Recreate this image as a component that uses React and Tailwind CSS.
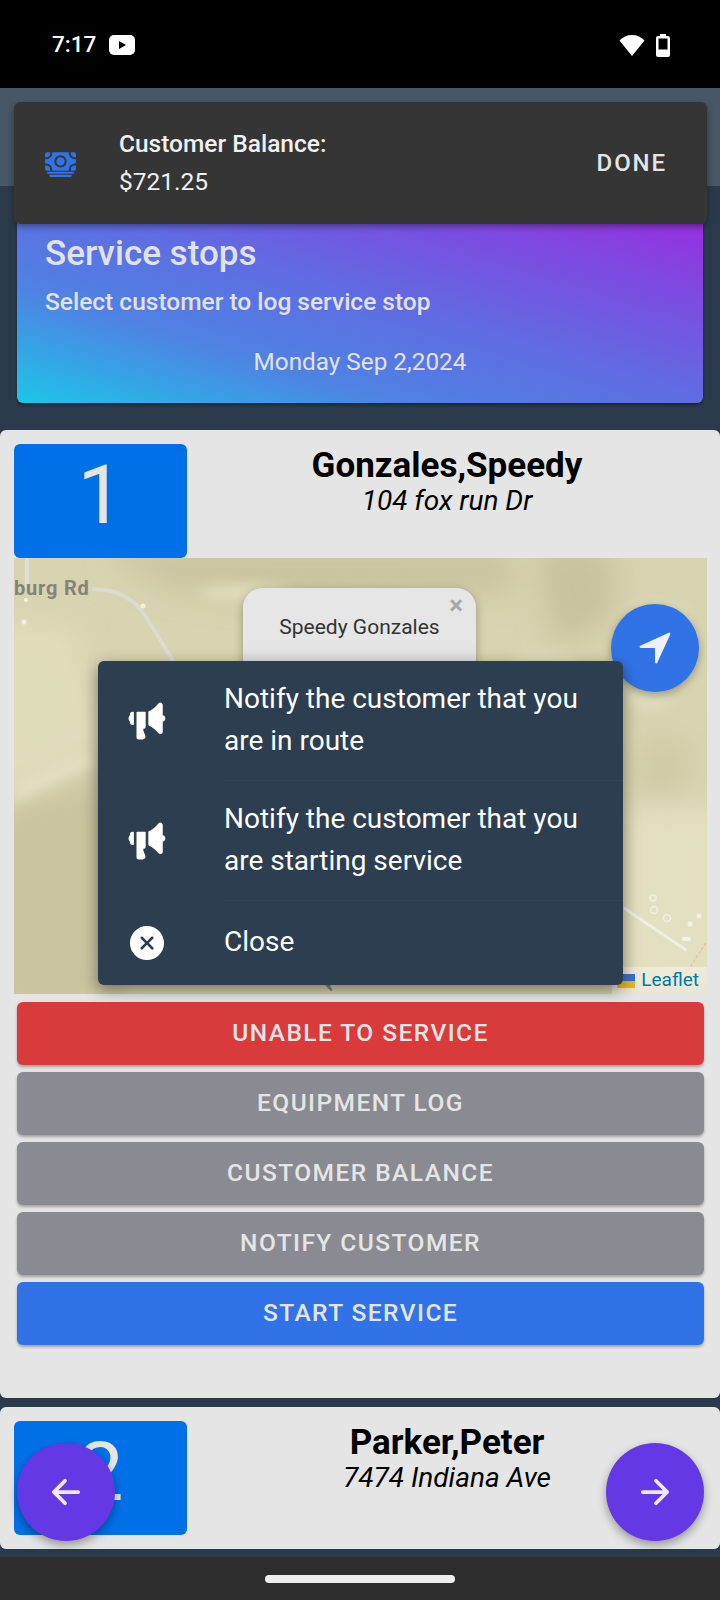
import { IoCash, IoMegaphone, IoCloseCircle, IoNavigate, IoArrowBack, IoArrowForward } from 'react-icons/io5';

const ROBOTO = 'font-["Roboto",sans-serif]';

function StatusBar() {
  return (
    <div className="flex h-[88px] items-center justify-between bg-black pl-[52px] pr-[50px] pt-[2px] text-white">
      <div className="flex items-center gap-[13px]">
        <span className="text-[22.5px] font-medium">7:17</span>
        <svg width="26" height="20" viewBox="0 0 26 20">
          <rect width="26" height="20" rx="5" fill="#fff" />
          <path d="M10 6l7 4-7 4z" fill="#000" />
        </svg>
      </div>
      <div className="flex items-center gap-[11px]">
        <svg width="26" height="22" viewBox="0 0 26 22">
          <path d="M13 22L0.5 6.5C4 3 8 1 13 1s9 2 12.5 5.5z" fill="#fff" />
        </svg>
        <svg width="14" height="23" viewBox="0 0 14 23">
          <path d="M4 0h6v2h2a2 2 0 012 2v17a2 2 0 01-2 2H2a2 2 0 01-2-2V4a2 2 0 012-2h2z" fill="#fff" />
          <rect x="2.5" y="4.5" width="9" height="11" fill="#000" />
        </svg>
      </div>
    </div>
  );
}

function StopHeader({ num, name, address }) {
  return (
    <div className="flex h-[114px] shrink-0">
      <div className="ml-[14px] flex h-[114px] w-[173px] items-center justify-center rounded-[6px] bg-[#0070e8] pb-[12px] text-[82px] font-normal text-[#e5e5e5]">
        {num}
      </div>
      <div className="flex-1 pr-[13px] pt-[2px] text-center text-black">
        <div className="text-[35px] font-bold leading-[40px]">{name}</div>
        <div className="text-[28px] italic leading-[30px]">{address}</div>
      </div>
    </div>
  );
}

function ActionButton({ label, color }) {
  return (
    <button className={`flex h-[63px] items-center justify-center rounded-[6px] text-[24.5px] font-medium tracking-[1.45px] text-[#e5e5e5] shadow-[0_2px_3px_rgba(0,0,0,0.3)] ${color}`}>
      {label}
    </button>
  );
}

function MapTerrain() {
  return (
    <svg className="absolute inset-0" width="693" height="436" viewBox="0 0 693 436">
      <defs>
        <filter id="blur14"><feGaussianBlur stdDeviation="14" /></filter>
        <filter id="blur6"><feGaussianBlur stdDeviation="6" /></filter>
      </defs>
      <rect width="693" height="436" fill="#d8d3b0" />
      <g filter="url(#blur14)">
        <path d="M-20 250L90 220L110 460L-20 460Z" fill="#cbc4a0" />
        <path d="M-20 60L60 70L90 190L-20 240Z" fill="#e0ddbb" />
        <path d="M90 -10H500V35L300 50L150 30Z" fill="#cbc4a0" />
        <path d="M520 -10H600V60L540 90Z" fill="#c9c29f" />
        <path d="M610 250H710V430H610Z" fill="#e3e0c1" />
        <path d="M630 180L680 190L660 240L620 230Z" fill="#cfc9a6" />
        <path d="M90 190L130 190L130 400L90 400Z" fill="#c6bf9b" />
      </g>
      <g filter="url(#blur6)">
        <path d="M0 225L70 195L80 205L0 245Z" fill="#e3e0c0" />
        <ellipse cx="230" cy="35" rx="45" ry="9" fill="#dfdbb9" />
        <ellipse cx="530" cy="105" rx="35" ry="10" fill="#e0ddbd" />
        <ellipse cx="645" cy="55" rx="30" ry="12" fill="#dedab8" />
        <ellipse cx="635" cy="140" rx="22" ry="12" fill="#e0dcbb" />
      </g>
      <path d="M13 0V30" stroke="#dfded6" strokeWidth="4" fill="none" />
      <path d="M78 31C100 31 118 38 130 56C142 74 152 92 165 112" stroke="#dcdbd0" strokeWidth="4" fill="none" />
      <path d="M610 350L672 392" stroke="#efeee6" strokeWidth="3" fill="none" />
      <g fill="none" stroke="#f0efe2" strokeWidth="1.5">
        <circle cx="640" cy="352" r="3.5" />
        <circle cx="653" cy="360" r="3.5" />
        <circle cx="639" cy="340" r="3" />
      </g>
      <g fill="#f2f1e6">
        <circle cx="685" cy="358" r="2.5" />
        <circle cx="676" cy="366" r="2.5" />
        <rect x="668" y="379" width="9" height="4" rx="2" />
        <circle cx="129" cy="48" r="2.5" />
        <circle cx="10" cy="64" r="2.5" />
        <circle cx="12" cy="42" r="2" />
      </g>
      <path d="M692 385L672 415" stroke="#e7c0a8" strokeWidth="1.5" strokeDasharray="3 2" fill="none" />
      <text x="0" y="37" fontFamily="Roboto, sans-serif" fontWeight="700" fontSize="20" letterSpacing="0.8" fill="#85827a">burg Rd</text>
      <text x="0" y="0" transform="translate(316 434) rotate(-40)" fontFamily="Roboto, sans-serif" fontWeight="700" fontSize="16" fill="#85827a">F</text>
    </svg>
  );
}

function MenuRow({ icon, children, className, divider }) {
  return (
    <div className={`flex items-center ${className}`}>
      <div className="flex w-[126px] shrink-0 justify-center pr-[28px] text-white">{icon}</div>
      <div className={`flex h-full flex-1 items-center pb-[2px] text-[28px] leading-[42px] text-white ${divider ? 'border-b border-[#304357]' : ''}`}>
        <span>{children}</span>
      </div>
    </div>
  );
}

function Fab({ icon, className }) {
  return (
    <div className={`absolute flex h-[98px] w-[98px] items-center justify-center rounded-full bg-[#6439e5] text-[#efe9fd] shadow-[0_4px_10px_rgba(0,0,0,0.35)] ${className}`}>
      {icon}
    </div>
  );
}

export default function App() {
  return (
    <div className={`relative h-[1600px] w-[720px] overflow-hidden bg-[#2a3a4a] ${ROBOTO}`}>
      <StatusBar />
      <div className="h-[98px] bg-[#475766]" />

      {/* Gradient banner, top is hidden under the toast */}
      <div className="mx-[17px] mt-[10px] flex h-[207px] flex-col rounded-[6px] bg-[linear-gradient(to_top_right,#1dc5e8_0%,#4f82e3_28%,#5f6de2_50%,#7d4be1_75%,#a025df_100%)] px-[28px] pt-[37px] text-[#e2e2ee] shadow-[0_2px_3px_rgba(0,0,0,0.35)]">
        <div className="text-[35px] font-medium leading-[42px]">Service stops</div>
        <div className="mt-[13px] text-[24.5px] font-medium leading-[28px]">Select customer to log service stop</div>
        <div className="mt-[32px] text-center text-[24.3px] leading-[28px]">Monday Sep 2,2024</div>
      </div>

      {/* Stop 1 */}
      <div className="mt-[27px] flex h-[968px] flex-col rounded-[6px] bg-[#e5e5e5] pt-[14px]">
        <StopHeader num="1" name="Gonzales,Speedy" address="104 fox run Dr" />
        <div className="relative ml-[14px] h-[436px] w-[693px] shrink-0 overflow-hidden">
          <MapTerrain />
          <div className="absolute left-[229px] top-[30px] flex h-[90px] w-[233px] justify-center rounded-[20px] bg-[linear-gradient(#e6e6e6_60%,#dcdcdc)] pt-[24px] text-[21px] text-[#333] shadow-[0_3px_10px_rgba(0,0,0,0.3)]">
            Speedy Gonzales
            <span className="absolute right-[13px] top-[0px] text-[26px] font-bold leading-[34px] text-[#a8a8a8]">×</span>
          </div>
          <div className="absolute left-[597px] top-[46px] flex h-[88px] w-[88px] items-center justify-center rounded-full bg-[#3173e6] text-[#eef1fa] shadow-[0_3px_8px_rgba(0,0,0,0.3)]">
            <IoNavigate size={38} />
          </div>
          <div className="absolute bottom-0 right-0 flex h-[27px] items-center gap-[6px] bg-white/40 pl-[5px] pr-[8px] text-[19px] text-[#0078a8]">
            <span className="flex h-[14px] w-[18px] flex-col">
              <span className="h-[7px] bg-[#3b6fd0]" />
              <span className="h-[7px] bg-[#e3bb1d]" />
            </span>
            Leaflet
          </div>
        </div>
        <div className="ml-[17px] mr-[16px] mt-[8px] flex flex-col gap-[7px]">
          <ActionButton label="UNABLE TO SERVICE" color="bg-[#d93a3c]" />
          <ActionButton label="EQUIPMENT LOG" color="bg-[#8a8b92]" />
          <ActionButton label="CUSTOMER BALANCE" color="bg-[#8a8b92]" />
          <ActionButton label="NOTIFY CUSTOMER" color="bg-[#8a8b92]" />
          <ActionButton label="START SERVICE" color="bg-[#3173e6]" />
        </div>
      </div>

      {/* Stop 2, cut by the nav bar */}
      <div className="mt-[9px] h-[142px] rounded-[6px] bg-[#e5e5e5] pt-[14px]">
        <StopHeader num="2" name="Parker,Peter" address="7474 Indiana Ave" />
      </div>

      {/* Android nav bar */}
      <div className="absolute bottom-0 left-0 flex h-[43px] w-full items-start justify-center bg-[#2d2d2d] pt-[18px]">
        <div className="h-[8px] w-[190px] rounded-full bg-[#eeeeee]" />
      </div>

      <Fab icon={<IoArrowBack size={40} />} className="left-[17px] top-[1443px]" />
      <Fab icon={<IoArrowForward size={40} />} className="left-[606px] top-[1443px]" />

      {/* Action sheet */}
      <div className="absolute left-[98px] top-[661px] flex h-[324px] w-[525px] flex-col rounded-[6px] bg-[#2c3e50] shadow-[0_5px_16px_rgba(0,0,0,0.45)]">
        <MenuRow icon={<IoMegaphone size={42} />} className="h-[120px]" divider>
          Notify the customer that you<br />are in route
        </MenuRow>
        <MenuRow icon={<IoMegaphone size={42} />} className="h-[120px]" divider>
          Notify the customer that you<br />are starting service
        </MenuRow>
        <MenuRow icon={<IoCloseCircle size={42} />} className="h-[84px]">
          Close
        </MenuRow>
      </div>

      {/* Toast */}
      <div className="absolute left-[14px] top-[102px] flex h-[122px] w-[693px] items-center rounded-[6px] bg-[#353535] shadow-[0_3px_6px_rgba(0,0,0,0.35)]">
        <div className="flex w-[105px] shrink-0 justify-center pl-[1px] pr-[13px] pt-[2px] text-[#3173e6]">
          <IoCash size={33} />
        </div>
        <div className="flex-1 text-[#f0f0f0]">
          <div className="text-[24.5px] font-medium leading-[38px]">Customer Balance:</div>
          <div className="text-[24.5px] leading-[38px]">$721.25</div>
        </div>
        <div className="pr-[40px] text-[24px] font-medium tracking-[1.9px] text-[#e5e5e5]">DONE</div>
      </div>
    </div>
  );
}
